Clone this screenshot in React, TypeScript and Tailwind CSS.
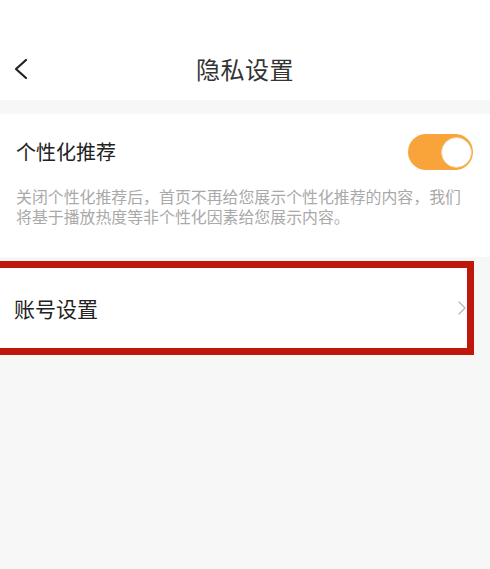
import React from 'react';

const App: React.FC = () => {
  return (
    <div
      className="min-h-[569px] w-[490px] bg-[#f7f7f7] overflow-hidden"
      style={{ fontFamily: '"Noto Sans CJK SC", "Noto Sans", sans-serif' }}
    >
      <header className="h-[100px] bg-white grid grid-cols-[1fr_auto_1fr] items-center pt-[38px]">
        <div className="pl-[13px]">
          <svg width="16" height="22" viewBox="0 0 16 22" fill="none">
            <path d="M13 2 L3 11 L13 20" stroke="#222" strokeWidth="2.2" strokeLinecap="round" strokeLinejoin="round" />
          </svg>
        </div>
        <h1 className="text-[24px] leading-none text-[#333] tracking-[0.5px]">隐私设置</h1>
        <div />
      </header>

      <section className="mt-[14px] bg-white h-[143px] px-[16px] pt-[20px]">
        <div className="flex items-center justify-between">
          <span className="text-[20px] text-[#222] leading-none">个性化推荐</span>
          <div className="w-[65px] h-[36px] rounded-full bg-[#f9a43b] flex items-center justify-end pr-[1px] mr-[1px]">
            <div className="w-[31px] h-[31px] rounded-full bg-white border border-[#e6d49a]" />
          </div>
        </div>
        <p className="mt-[17px] w-[450px] text-[15.9px] leading-[19.5px] text-[#a9a9a9]">
          关闭个性化推荐后，首页不再给您展示个性化推荐的内容，我们将基于播放热度等非个性化因素给您展示内容。
        </p>
      </section>

      <div className="mt-[4px] w-[481px] -ml-[7px] border-[7px] border-[#c0170c] bg-white h-[94px] flex items-center justify-between pl-[14px] pr-[1px]">
        <span className="text-[21px] text-[#222] leading-none">账号设置</span>
        <svg width="8" height="14" viewBox="0 0 8 14" fill="none">
          <path d="M1 1 L7 7 L1 13" stroke="#b5b5b5" strokeWidth="1.3" strokeLinecap="round" strokeLinejoin="round" />
        </svg>
      </div>
    </div>
  );
};

export default App;
